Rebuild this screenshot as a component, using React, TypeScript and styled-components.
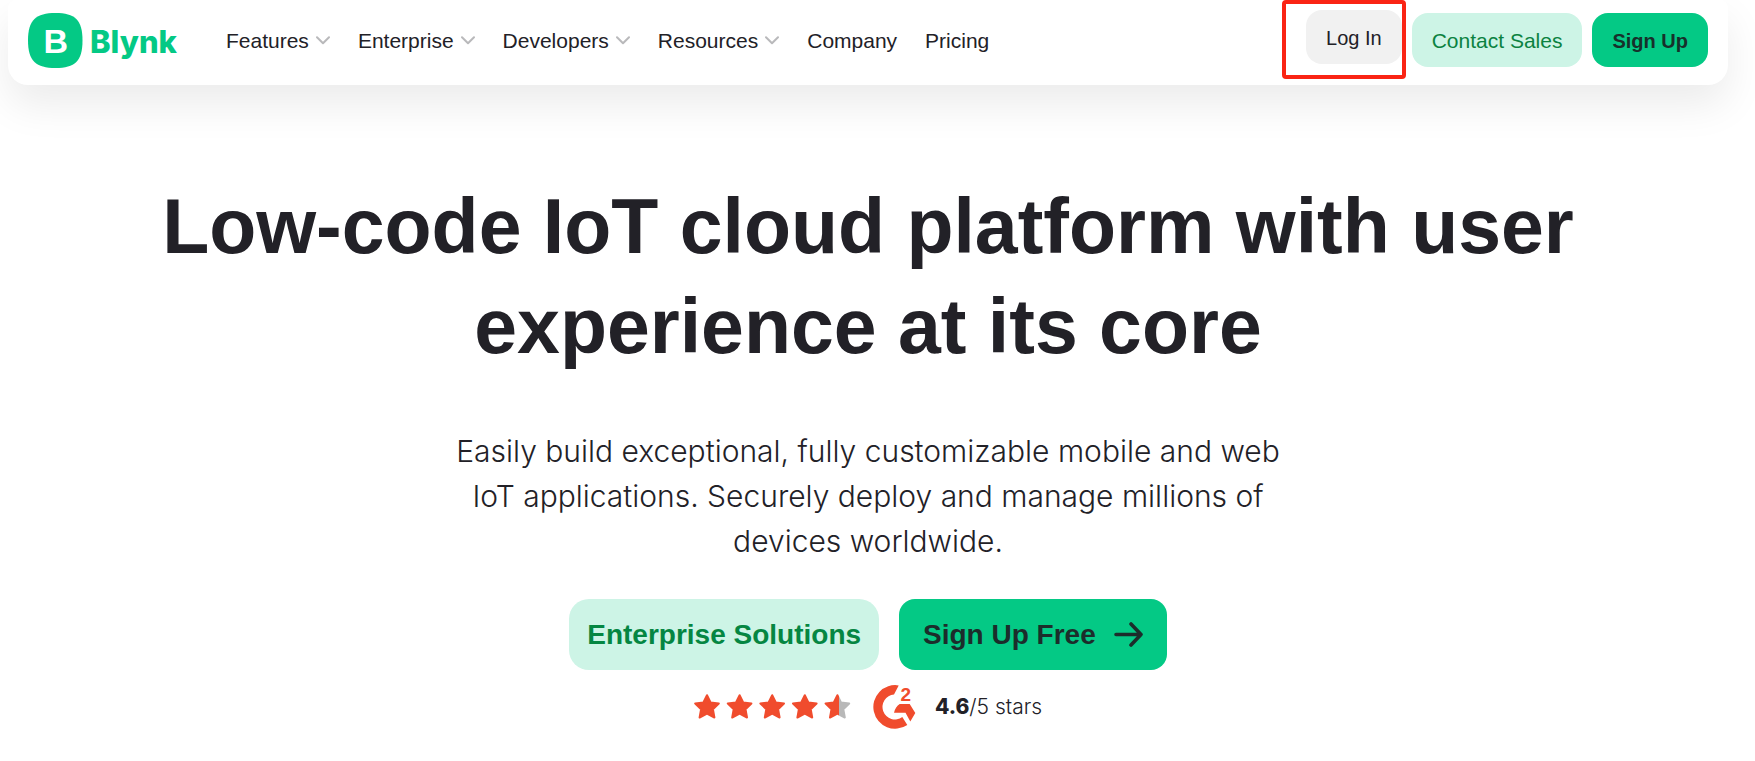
import React from "react";
import styled, { createGlobalStyle, css } from "styled-components";

const green = "#04c985";
const mint = "#cdf4e6";
const ink = "#222127";
const red = "#f04c2d";

const GlobalStyle = createGlobalStyle`
  * { box-sizing: border-box; }
  body {
    margin: 0;
    background: #fff;
    color: ${ink};
    font-family: "Liberation Sans", Arial, sans-serif;
  }
  a { color: inherit; text-decoration: none; }
`;

const lightFace = css`
  font-family: Inter, "Liberation Sans", sans-serif;
  font-weight: 300;
`;

const Page = styled.div`
  padding: 0 27px 24px 8px;
`;

const Header = styled.header`
  display: flex;
  align-items: flex-start;
  padding: 13px 20px 17px;
  border-radius: 8px 8px 20px 20px;
  background: #fff;
  box-shadow: 0 20px 40px rgba(0, 0, 0, 0.08);
`;

const Brand = styled.a`
  display: flex;
  align-items: center;
  gap: 7px;
  width: 198px;
  height: 55px;
`;

const BrandName = styled.span`
  padding-top: 2px;
  color: ${green};
  font-family: Inter, sans-serif;
  font-size: 31px;
  font-weight: 800;
  line-height: 40px;
`;

const Nav = styled.nav`
  display: flex;
  gap: 28px;
  height: 55px;
`;

const itemText = css`
  color: ${ink};
  font-family: inherit;
  font-size: 21px;
  font-weight: 400;
  line-height: 24px;
`;

const NavLink = styled.a`
  ${itemText}
  display: flex;
  align-items: center;
`;

const NavMenu = styled.button`
  ${itemText}
  display: flex;
  align-items: center;
  gap: 7px;
  padding: 0;
  border: 0;
  background: none;
  cursor: pointer;
`;

const Actions = styled.div`
  display: flex;
  gap: 10px;
  margin-left: auto;
`;

type Tone = "plain" | "mint" | "green";

const tones = {
  plain: css`background: #f1f1f1; color: ${ink}; font-size: 20px;`,
  mint: css`background: ${mint}; color: #0b8241; font-size: 21px;`,
  green: css`background: ${green}; color: #17302b; font-size: 20px; font-weight: 700;`,
};

const ActionLink = styled.a<{ $tone: Tone }>`
  display: flex;
  align-items: center;
  height: 54px;
  padding: 2px 20px 0;
  border-radius: 16px;
  line-height: 24px;
  ${({ $tone }) => tones[$tone]}
`;

const Highlighted = styled.div`
  position: relative;
  height: 54px;
  margin-top: -3px;
`;

const HighlightFrame = styled.span`
  position: absolute;
  inset: -10px -4px -15px -24px;
  border: 4px solid #fa2414;
  border-radius: 4px;
  pointer-events: none;
`;

const Hero = styled.main`
  display: flex;
  flex-direction: column;
  align-items: center;
  padding-top: 91px;
  text-align: center;
`;

const Title = styled.h1`
  max-width: 1440px;
  margin: 0;
  font-size: 77px;
  font-weight: 700;
  line-height: 100px;
`;

const Lead = styled.p`
  ${lightFace}
  max-width: 860px;
  margin: 53px 0 0;
  font-size: 30px;
  line-height: 45px;
`;

const Choices = styled.div`
  display: flex;
  gap: 20px;
  margin-top: 35px;
`;

const Choice = styled.a<{ $tone: "mint" | "green" }>`
  display: flex;
  align-items: center;
  gap: 18px;
  height: 71px;
  padding: ${({ $tone }) => ($tone === "green" ? "0 24px" : "0 18px")};
  border-radius: ${({ $tone }) => ($tone === "green" ? "16px" : "20px")};
  background: ${({ $tone }) => ($tone === "green" ? green : mint)};
  color: ${({ $tone }) => ($tone === "green" ? "#1c2d2b" : "#058642")};
  font-size: 28px;
  font-weight: 700;
  line-height: 32px;
`;

const Rating = styled.div`
  ${lightFace}
  display: flex;
  align-items: center;
  margin-top: 15px;
  font-size: 21px;
  line-height: 24px;
`;

const StarSvg = styled.svg`
  margin-right: 22px;
`;

const G2Svg = styled.svg`
  margin-right: 18px;
`;

const Score = styled.strong`
  font-weight: 800;
`;

const LogoMark = () => (
  <svg width="55" height="55" viewBox="0 0 55 55" aria-hidden="true">
    <path
      d="M27.500 0C47 0 54.500 7 54.500 27.500S47 55 27.500 55 0 48 0 27.500 8 0 27.500 0Z"
      fill={green}
    />
    <text x="15.500" y="39.700" fill="#fff" fontSize="34" fontWeight="700" fontFamily="Liberation Sans, sans-serif">
      B
    </text>
  </svg>
);

const Chevron = () => (
  <svg width="14" height="9" viewBox="0 0 14 9" fill="none" aria-hidden="true">
    <path d="M1 1.200 7 7.200 13 1.200" stroke="#b9b9bb" strokeWidth="2" strokeLinecap="round" strokeLinejoin="round" />
  </svg>
);

const Arrow = () => (
  <svg width="29" height="28" viewBox="0 0 29 28" fill="none" aria-hidden="true">
    <path
      d="M2 13.500H27M17 3 27 13.500 17 24"
      stroke="#1c2d2b"
      strokeWidth="3.600"
      strokeLinecap="round"
      strokeLinejoin="round"
    />
  </svg>
);

const starPath =
  "M13 1.200 16.600 8.400 24.800 9.500 18.900 15.200 20.400 23.500 13 19.700 5.600 23.500 7.100 15.200 1.200 9.500 9.400 8.400Z";

const Stars = () => (
  <StarSvg width="157" height="27" viewBox="0 0 157 27" role="img" aria-label="4.6 out of 5 stars">
    <defs>
      <linearGradient id="partial" gradientUnits="userSpaceOnUse" x1="0" y1="0" x2="26" y2="0">
        <stop offset="0.58" stopColor={red} />
        <stop offset="0.58" stopColor="#b8b8b8" />
      </linearGradient>
    </defs>
    {[0, 1, 2, 3, 4].map((n) => {
      const paint = n === 4 ? "url(#partial)" : red;
      return (
        <path
          key={n}
          d={starPath}
          transform={`translate(${n * 32.6} 0)`}
          fill={paint}
          stroke={paint}
          strokeWidth="2"
          strokeLinejoin="round"
        />
      );
    })}
  </StarSvg>
);

const G2Logo = () => (
  <G2Svg width="44" height="44" viewBox="0 0 44 44" fill={red} role="img" aria-label="G2">
    <path d="M25.700 .4A21.800 21.800 0 1 0 34.300 40L29.300 32.100A12.500 12.500 0 1 1 21 9.500Z" />
    <path d="M26.700 19H36.700L42.300 28 37.300 36.500 32.500 27.700H21Q22.500 21.500 26.700 19Z" />
    <text x="27.500" y="15.700" fontSize="19" fontWeight="700" fontFamily="Liberation Sans, sans-serif">
      2
    </text>
  </G2Svg>
);

const menus = ["Features", "Enterprise", "Developers", "Resources"];
const links = ["Company", "Pricing"];

export default function App() {
  return (
    <>
      <GlobalStyle />
      <Page>
        <Header>
          <Brand href="#" aria-label="Blynk">
            <LogoMark />
            <BrandName>Blynk</BrandName>
          </Brand>
          <Nav>
            {menus.map((label) => (
              <NavMenu key={label} type="button">
                {label}
                <Chevron />
              </NavMenu>
            ))}
            {links.map((label) => (
              <NavLink key={label} href="#">
                {label}
              </NavLink>
            ))}
          </Nav>
          <Actions>
            <Highlighted>
              <ActionLink href="#" $tone="plain">Log In</ActionLink>
              <HighlightFrame />
            </Highlighted>
            <ActionLink href="#" $tone="mint">Contact Sales</ActionLink>
            <ActionLink href="#" $tone="green">Sign Up</ActionLink>
          </Actions>
        </Header>
        <Hero>
          <Title>Low-code IoT cloud platform with user experience at its core</Title>
          <Lead>
            Easily build exceptional, fully customizable mobile and web IoT applications. Securely
            deploy and manage millions of devices worldwide.
          </Lead>
          <Choices>
            <Choice href="#" $tone="mint">Enterprise Solutions</Choice>
            <Choice href="#" $tone="green">
              Sign Up Free
              <Arrow />
            </Choice>
          </Choices>
          <Rating>
            <Stars />
            <G2Logo />
            <span>
              <Score>4.6</Score>/5 stars
            </span>
          </Rating>
        </Hero>
      </Page>
    </>
  );
}
